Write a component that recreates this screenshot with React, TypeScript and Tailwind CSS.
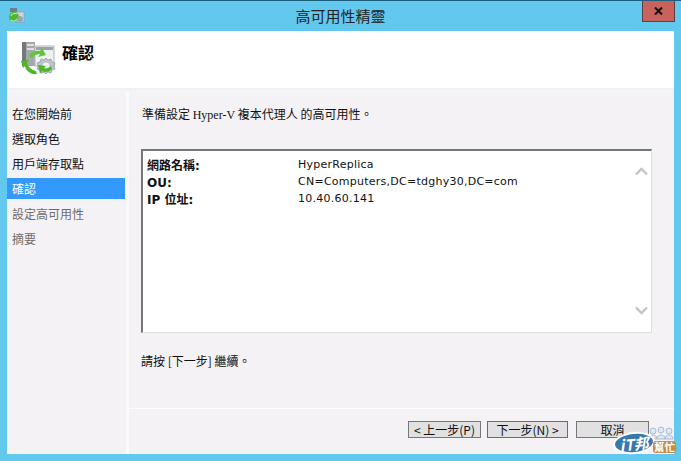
const CJK = "font-['Noto_Sans_CJK_TC',sans-serif]";

const STEPS = [
  { label: "在您開始前", state: "done" },
  { label: "選取角色", state: "done" },
  { label: "用戶端存取點", state: "done" },
  { label: "確認", state: "active" },
  { label: "設定高可用性", state: "todo" },
  { label: "摘要", state: "todo" },
];

const DETAILS = [
  { name: "網路名稱:", value: "HyperReplica" },
  { name: "OU:", value: "CN=Computers,DC=tdghy30,DC=com" },
  { name: "IP 位址:", value: "10.40.60.141" },
];

function ServerIcon() {
  return (
    <svg width="35" height="35" viewBox="0 0 35 35" aria-hidden="true">
      <rect x="1" y="1" width="13" height="24" fill="#a5a8aa" />
      <rect x="1" y="1" width="4" height="24" fill="#74787b" />
      <rect x="6" y="3" width="7" height="2" fill="#dcdedf" />
      <rect x="6" y="7" width="7" height="2" fill="#dcdedf" />
      <rect x="14" y="5" width="19" height="20" fill="#eef0f2" stroke="#b4b8bb" />
      <rect x="15" y="6" width="17" height="3" fill="#9ea3a7" />
      <path d="M25 17l2 2 3-1 1 3 3 1-1 3 1 3-3 1-1 3-3-1-2 2-2-2-3 1-1-3-3-1 1-3-1-3 3-1 1-3 3 1z" fill="#bcc3c9" stroke="#929aa0" strokeWidth=".7" />
      <circle cx="25" cy="25" r="3.500" fill="#f1f3f4" />
      <path d="M8 15c2-4 7-6 11-5l2-3 4 7-8 2 2-3c-3 0-6 1-8 4z" fill="#62c43d" />
      <path d="M0 20l8-1-2 3c1 4 5 7 9 8l1 3c-6 1-11-3-12-8l-2 2z" fill="#4eb52c" />
      <path d="M17 24l8 1-2 2c2 1 5 0 7-2l1 3c-3 3-7 4-10 2l-2 3z" fill="#4eb52c" />
    </svg>
  );
}

function TitleIcon() {
  return (
    <svg width="17" height="17" viewBox="0 0 17 17" aria-hidden="true">
      <rect x="2" y="1" width="7" height="4" fill="#6e7e88" />
      <rect x="8" y="5" width="8" height="10" fill="#cfd6dc" stroke="#8c979f" strokeWidth=".6" />
      <circle cx="6" cy="10" r="5" fill="#4fb52f" />
      <path d="M3 9c1-3 4-3 6-2M9 12c-1 2-4 3-6 1" fill="none" stroke="#b6e89e" strokeWidth="1.200" />
      <circle cx="12" cy="12" r="3" fill="#9aa6ae" />
    </svg>
  );
}

function DialogButton({ label, primary }: { label: string; primary?: boolean }) {
  return (
    <button
      className={`flex h-[17px] items-center justify-center border bg-[#e1e1e1] text-[12px] leading-none text-[#111] ${CJK} ${
        primary ? "w-[81px] border-[#4a7596]" : "w-[73px] border-[#777]"
      }`}
    >
      {label}
    </button>
  );
}

export default function App() {
  return (
    <div className="relative flex h-[461px] w-[681px] flex-col overflow-hidden border-t border-[#1d5f7c] bg-[#63c8ee] font-['DejaVu_Sans',sans-serif] text-[#111]">
      {/* Title bar */}
      <header className="relative flex h-[30px] shrink-0 items-center justify-center">
        <span className="absolute left-[8px] top-[6px]">
          <TitleIcon />
        </span>
        <h1 className={`text-[15px] text-[#222] ${CJK}`}>高可用性精靈</h1>
        <button className="absolute right-[6px] top-0 flex h-[21px] w-[33px] items-center justify-center border border-t-0 border-[#5a3f44] bg-[#c9615c]">
          <svg width="9" height="8" viewBox="0 0 9 8" aria-hidden="true">
            <path d="M1 .5l7 7M8 .5l-7 7" stroke="#111" strokeWidth="2" />
          </svg>
        </button>
      </header>

      <div className="mx-[7px] flex h-[423px] shrink-0 flex-col bg-[#f5f2f6]">
        {/* Page header */}
        <div className="flex h-[58px] shrink-0 items-start gap-[6px] border-b border-[#f0eef2] bg-white pl-[14px] pt-[10px]">
          <ServerIcon />
          <h2 className={`-mt-[1px] text-[16px] font-bold leading-[24px] text-black ${CJK}`}>確認</h2>
        </div>

        <div className="flex min-h-0 flex-1 pt-[3px]">
          {/* Step list */}
          <nav className={`flex w-[119px] shrink-0 flex-col pt-[11px] text-[12px] ${CJK}`}>
            {STEPS.map((step) => (
              <div
                key={step.label}
                className={`mb-[4px] mr-[1px] flex h-[21px] items-center pl-[5px] ${
                  step.state === "active"
                    ? "bg-[#3399ff] text-white"
                    : step.state === "todo"
                      ? "text-[#6d6d6d]"
                      : "text-[#111]"
                }`}
              >
                {step.label}
              </div>
            ))}
          </nav>
          <div className="w-[3px] shrink-0 bg-[#fbfafc]" />

          {/* Content */}
          <main className="flex min-w-0 flex-1 flex-col">
            <div className="flex flex-1 flex-col border-b border-[#fcfbfd] pl-[12px] pr-[22px]">
              <p className={`ml-[1px] mt-[13px] h-[18px] text-[12px] leading-[18px] ${CJK}`}>
                準備設定 <span className="font-['Liberation_Serif',serif]">Hyper-V</span> 複本代理人 的高可用性。
              </p>
              <div className="relative mt-[26px] h-[184px] border-[2px] border-b-[1px] border-r-[1px] border-[#76767a] border-b-[#dedde0] border-r-[#dedde0] bg-white pl-[4px] pt-[6px] text-[11px]">
                <dl className="flex flex-col">
                  {DETAILS.map((d) => (
                    <div key={d.name} className="flex h-[17px] items-center">
                      <dt className="w-[151px] shrink-0 font-['DejaVu_Sans','Noto_Sans_CJK_TC',sans-serif] text-[12px] font-bold">
                        {d.name}
                      </dt>
                      <dd className="tracking-[0.25px]">{d.value}</dd>
                    </div>
                  ))}
                </dl>
                <svg className="absolute right-[3px] top-[16px]" width="13" height="9" viewBox="0 0 13 9" aria-hidden="true">
                  <path d="M1 7.500l5.500-5.500L12 7.500" fill="none" stroke="#c3c3c6" strokeWidth="2.400" />
                </svg>
                <svg className="absolute bottom-[17px] right-[3px]" width="13" height="9" viewBox="0 0 13 9" aria-hidden="true">
                  <path d="M1 1.500L6.500 7 12 1.500" fill="none" stroke="#c3c3c6" strokeWidth="2.400" />
                </svg>
              </div>
              <p className={`mt-[19px] text-[12px] leading-[18px] ${CJK}`}>請按 [下一步] 繼續。</p>
            </div>

            {/* Buttons */}
            <div className="flex h-[45px] shrink-0 items-start justify-end gap-[6px] pr-[25px] pt-[12px]">
              <DialogButton label="< 上一步(P)" />
              <div className="mr-[2px]">
                <DialogButton label="下一步(N) >" primary />
              </div>
              <DialogButton label="取消" />
            </div>
          </main>
        </div>
      </div>

      {/* Watermark */}
      <div className="absolute left-[613px] top-[425px] h-[30px] w-[66px]">
        <svg className="absolute left-[34px] top-0" width="27" height="14" viewBox="0 0 27 14" aria-hidden="true">
          <g fill="#dfe8f2" stroke="#a9bdd6" strokeWidth="1">
            <circle cx="6" cy="5" r="3" />
            <circle cx="14" cy="4" r="3" />
            <circle cx="22" cy="5" r="3" />
            <path d="M2 13c0-3 2-4 4-4s4 1 4 4zM10 13c0-3 2-4 4-4s4 1 4 4zM18 13c0-3 2-4 4-4s4 1 4 4z" />
          </g>
        </svg>
        <div className="absolute left-0 top-[6px] flex h-[22px] w-[42px] -rotate-6 items-center justify-center rounded-[50%] border-2 border-white bg-[#3a77ad] text-[15px] font-bold italic leading-none text-white">
          <span className={CJK}>iT邦</span>
        </div>
        <div className={`absolute left-[40px] top-[15px] rounded-[3px] bg-[#c78a3e] px-[1px] text-[10.500px] font-bold leading-[12px] text-white ${CJK}`}>
          幫忙
        </div>
      </div>
    </div>
  );
}
